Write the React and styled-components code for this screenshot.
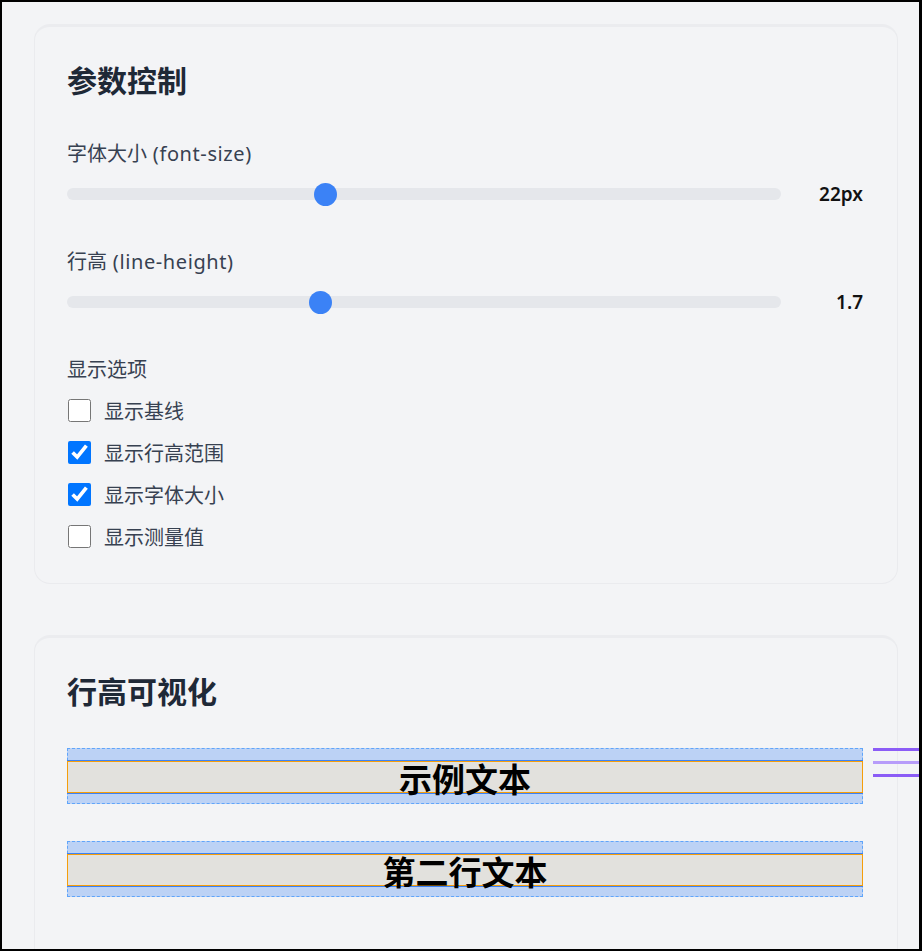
import React from 'react'
import styled, { createGlobalStyle } from 'styled-components';

const GlobalStyle = createGlobalStyle`
    html, body {
        margin: 0;
        padding: 0;
        overflow: hidden;
        background: #f3f4f6;
    }

    body {
        font-family: "Noto Sans", "Noto Sans CJK SC", sans-serif;
        color: #374151;
    }
`;

function App() {
    const [fontSize, setFontSize] = React.useState(22);
    const [lineHeight, setLineHeight] = React.useState(1.7);
    const [options, setOptions] = React.useState({
        baseline: false,
        lineBox: true,
        fontBox: true,
        measure: false,
    });

    const toggle = (key) => setOptions({ ...options, [key]: !options[key] });

    const optionList = [
        ['baseline', '显示基线'],
        ['lineBox', '显示行高范围'],
        ['fontBox', '显示字体大小'],
        ['measure', '显示测量值'],
    ];

    return (
        <>
            <GlobalStyle />
            <Page>
                <Card>
                    <CardTitle>参数控制</CardTitle>
                    <ControlGroup>
                        <Label>字体大小<Hint> (font-size)</Hint></Label>
                        <SliderRow>
                            <Slider type="range" min={12} max={40} step={1} value={fontSize}
                                onChange={e => setFontSize(Number(e.target.value))} />
                            <Value>{fontSize}px</Value>
                        </SliderRow>
                    </ControlGroup>
                    <ControlGroup>
                        <Label>行高<Hint> (line-height)</Hint></Label>
                        <SliderRow>
                            <Slider type="range" min={1} max={3} step={0.1} value={lineHeight}
                                onChange={e => setLineHeight(Number(e.target.value))} />
                            <Value>{lineHeight}</Value>
                        </SliderRow>
                    </ControlGroup>
                    <ControlGroup>
                        <Label>显示选项</Label>
                        <CheckList>
                            {optionList.map(([key, text]) => (
                                <CheckRow key={key}>
                                    <CheckBox type="checkbox" checked={options[key]} onChange={() => toggle(key)} />
                                    <span>{text}</span>
                                </CheckRow>
                            ))}
                        </CheckList>
                    </ControlGroup>
                </Card>

                <Card>
                    <CardTitle>行高可视化</CardTitle>
                    <VizList>
                        <LineBox>
                            {options.lineBox && <ContentBand><FontBand /></ContentBand>}
                            <SampleText>示例文本</SampleText>
                            <Markers>
                                <Marker />
                                <Marker faded />
                                <Marker />
                            </Markers>
                        </LineBox>
                        <LineBox>
                            {options.lineBox && <ContentBand><FontBand /></ContentBand>}
                            <SampleText>第二行文本</SampleText>
                        </LineBox>
                    </VizList>
                </Card>
            </Page>
            <Frame />
        </>
    );
}

export default App


const Page = styled.div`
    display: flex;
    flex-direction: column;
    gap: 51px;
    padding: 24px 24px 0 34px;
`;

const Card = styled.section`
    background: #f3f4f6;
    border: 1px solid #eaebee;
    border-top: 3px solid #ebecef;
    border-radius: 16px;
    padding: 36px 34px 33px 32px;
`;

const CardTitle = styled.h2`
    margin: 0 0 41px;
    font-size: 30px;
    line-height: 36px;
    font-weight: 700;
    color: #1f2937;
`;

const ControlGroup = styled.div`
    display: flex;
    flex-direction: column;
    margin-bottom: 42px;

    &:last-child {
        margin-bottom: 0;
    }
`;

const Label = styled.div`
    font-size: 20px;
    line-height: 28px;
    color: #374151;
    margin-bottom: 14px;
`;

const Hint = styled.span`
    letter-spacing: 0.6px;
`;

const SliderRow = styled.div`
    display: flex;
    align-items: center;
    gap: 20px;
    height: 24px;
`;

const Slider = styled.input`
    flex: 1;
    margin: 0;
    height: 24px;
    -webkit-appearance: none;
    appearance: none;
    background: transparent;

    &::-webkit-slider-runnable-track {
        height: 12px;
        border-radius: 6px;
        background: #e5e7eb;
    }

    &::-webkit-slider-thumb {
        -webkit-appearance: none;
        width: 23px;
        height: 23px;
        margin-top: -5.5px;
        border-radius: 50%;
        background: #3b82f6;
        border: none;
    }
`;

const Value = styled.span`
    width: 62px;
    text-align: right;
    font-size: 19px;
    font-weight: 600;
    color: #111;
`;

const CheckList = styled.div`
    display: flex;
    flex-direction: column;
    gap: 14px;
    margin-top: -2px;
`;

const CheckRow = styled.label`
    display: flex;
    align-items: center;
    gap: 13px;
    height: 28px;
    font-size: 20px;
    color: #374151;
    cursor: pointer;
`;

const CheckBox = styled.input`
    width: 23px;
    height: 23px;
    margin: 0 0 0 1px;
    accent-color: #0075ff;
`;

const VizList = styled.div`
    display: flex;
    flex-direction: column;
    gap: 37px;
    margin-top: -3px;
    padding-bottom: 60px;
`;

const LineBox = styled.div`
    position: relative;
    height: 54px;
    border: 1px dashed #60a5fa;
    background: #bcd2f5;
`;

const ContentBand = styled.div`
    position: absolute;
    left: -1px;
    right: -1px;
    top: 11px;
    height: 32px;
    border-top: 1px solid #3b82f6;
    border-bottom: 1px solid #3b82f6;
`;

const FontBand = styled.div`
    height: 30px;
    border: 1px solid #f59e0b;
    background: #e2e1dd;
`;

const SampleText = styled.div`
    position: relative;
    text-align: center;
    font-size: 33px;
    line-height: 54px;
    padding-top: 4px;
    font-weight: 700;
    color: #000;
`;

const Markers = styled.div`
    position: absolute;
    left: calc(100% + 11px);
    top: -1px;
    width: 60px;
    display: flex;
    flex-direction: column;
    gap: 10px;
`;

const Marker = styled.div`
    height: 3px;
    background: ${props => props.faded ? '#b79cfa' : '#8b5cf6'};
`;

const Frame = styled.div`
    position: fixed;
    inset: 0;
    border: 2px solid #000;
    border-right-width: 3px;
    pointer-events: none;
`;
